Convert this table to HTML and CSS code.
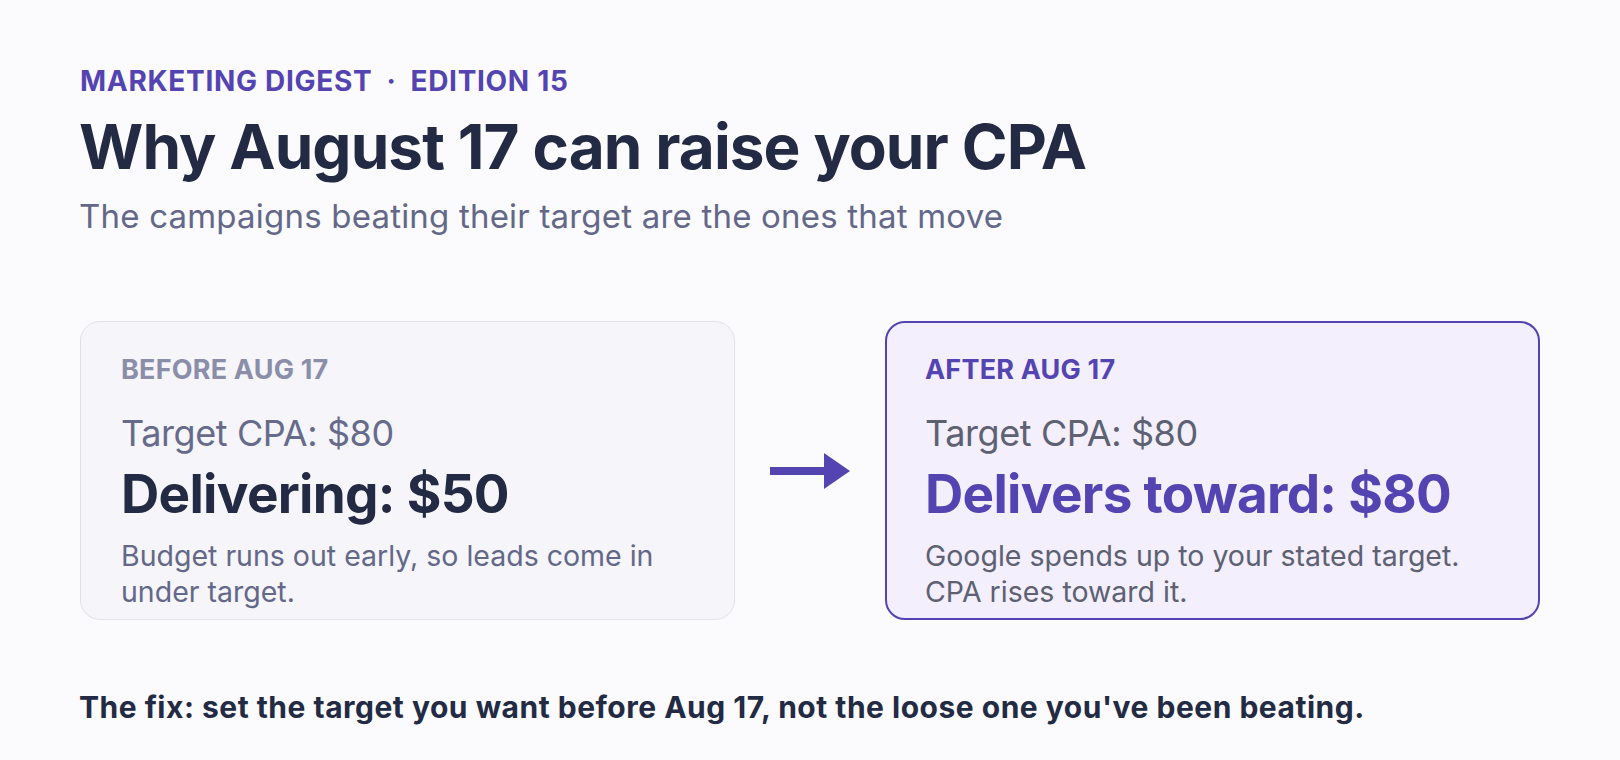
FILE: index.html
```html
<!DOCTYPE html>
<html lang="en">
<head>
<meta charset="utf-8">
<title>Marketing Digest</title>
<link rel="stylesheet" href="styles.css">
</head>
<body>
<main class="page">
  <div class="eyebrow"><span>MARKETING DIGEST</span><span class="dot">·</span><span>EDITION 15</span></div>
  <h1 class="title">Why August 17 can raise your CPA</h1>
  <p class="subtitle">The campaigns beating their target are the ones that move</p>

  <section class="compare">
    <div class="card before">
      <div class="label">BEFORE AUG 17</div>
      <div class="target">Target CPA: $80</div>
      <div class="value">Delivering: $50</div>
      <div class="note">Budget runs out early, so leads come in under target.</div>
    </div>
    <div class="arrow">
      <svg width="80" height="36" viewBox="0 0 80 36" aria-hidden="true">
        <rect x="0" y="14" width="56" height="8" fill="#5444b2"/>
        <polygon points="54,0 80,18 54,36" fill="#5444b2"/>
      </svg>
    </div>
    <div class="card after">
      <div class="label">AFTER AUG 17</div>
      <div class="target">Target CPA: $80</div>
      <div class="value">Delivers toward: $80</div>
      <div class="note">Google spends up to your stated target. CPA rises toward it.</div>
    </div>
  </section>

  <p class="fix">The fix: set the target you want before Aug 17, not the loose one you've been beating.</p>
</main>
</body>
</html>
```
FILE: styles.css
```css
html, body {
  margin: 0;
  padding: 0;
  background: #fbfbfd;
}
body {
  font-family: Inter, "Noto Sans", "Liberation Sans", sans-serif;
  color: #232a43;
  width: 1620px;
  height: 760px;
  overflow: hidden;
}
.page {
  padding: 64px 80px 0 80px;
}
.eyebrow {
  display: flex;
  gap: 14px;
  font-size: 28px;
  font-weight: 700;
  color: #5444b2;
  line-height: 34px;
  letter-spacing: 0.7px;
}
.title {
  margin: 13px 0 0 -1px;
  font-size: 62px;
  font-weight: 700;
  line-height: 72px;
  color: #232a43;
  letter-spacing: -0.9px;
}
.subtitle {
  margin: 13px 0 0 -1px;
  font-size: 33px;
  font-weight: 400;
  line-height: 40px;
  color: #646888;
  letter-spacing: 0.2px;
}
.compare {
  margin-top: 85px;
  display: flex;
  align-items: stretch;
  width: 1460px;
}
.card {
  box-sizing: border-box;
  width: 655px;
  height: 299px;
  border-radius: 20px;
}
.card.before {
  background: #f5f5fa;
  border: 1px solid #e1e1ea;
  padding: 31px 40px 0 40px;
}
.card.after {
  background: #f3effd;
  border: 2px solid #5444b2;
  padding: 30px 39px 0 38px;
}
.arrow {
  display: flex;
  align-items: center;
  justify-content: center;
  flex: 1;
}
.label {
  font-size: 27px;
  font-weight: 700;
  line-height: 34px;
  color: #8a8ea8;
  letter-spacing: 0.2px;
}
.after .label {
  color: #5444b2;
}
.target {
  margin-top: 24px;
  font-size: 36px;
  line-height: 44px;
  font-weight: 400;
  color: #676b8b;
  letter-spacing: -0.4px;
}
.after .target {
  color: #5d6172;
}
.value {
  margin-top: 8px;
  font-size: 53px;
  line-height: 62px;
  font-weight: 700;
  color: #232a43;
  letter-spacing: -0.7px;
}
.after .value {
  color: #5444b2;
}
.note {
  margin-top: 13px;
  font-size: 28.5px;
  line-height: 36px;
  color: #646888;
}
.after .note {
  color: #5d6172;
}
.fix {
  margin: 69px 0 0 -1px;
  font-size: 30px;
  font-weight: 700;
  line-height: 36px;
  color: #232a43;
  letter-spacing: 0.5px;
}
```
